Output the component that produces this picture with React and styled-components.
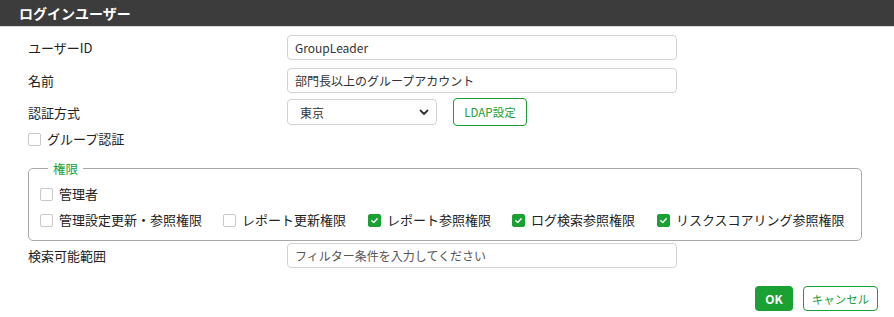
import React from "react";
import styled, { createGlobalStyle } from "styled-components";

const Global = createGlobalStyle`
  body { margin: 0; background: #fff; font-family: "Noto Sans CJK JP", "Noto Sans", sans-serif; color: #222; }
  * { box-sizing: border-box; }
`;

const GREEN = "#1aa033";

const Page = styled.div`
  width: 894px;
  height: 317px;
  display: flex;
  flex-direction: column;
`;

const Header = styled.div`
  height: 27px;
  background: #3c3c3c;
  border-bottom: 1px solid #d8d8d8;
  color: #fff;
  font-weight: 700;
  font-size: 14px;
  padding-left: 19px;
  display: flex;
  align-items: center;
`;

const Body = styled.div`
  padding: 8px 32px 0 28px;
  display: flex;
  flex-direction: column;
`;

const Row = styled.div`
  display: grid;
  grid-template-columns: 259px auto;
  align-items: center;
  margin-bottom: ${(p) => p.$mb ?? 8}px;
`;

const Label = styled.div`
  font-size: 13px;
  color: #222;
`;

const Input = styled.input`
  width: 390px;
  height: 25px;
  border: 1px solid #cfd3d8;
  border-radius: 4px;
  padding: 0 7px;
  font-size: 12px;
  font-family: inherit;
  color: #333;
  outline: none;
  &::placeholder { color: #555; }
`;

const Controls = styled.div`
  display: flex;
  align-items: center;
  gap: 16px;
`;

const SelectBox = styled.div`
  width: 150px;
  height: 26px;
  border: 1px solid #cfd3d8;
  border-radius: 4px;
  padding: 0 6px 0 12px;
  font-size: 12px;
  display: flex;
  align-items: center;
  justify-content: space-between;
  color: #333;
`;

const OutlineButton = styled.button`
  height: ${(p) => p.$h ?? 28}px;
  width: ${(p) => p.$w}px;
  padding: 0;
  border: 1px solid ${GREEN};
  border-radius: 4px;
  background: #fff;
  color: ${GREEN};
  font-family: inherit;
  font-size: 11.5px;
  cursor: pointer;
`;

const SolidButton = styled.button`
  height: 25px;
  width: 38px;
  border: none;
  border-radius: 4px;
  background: ${GREEN};
  color: #fff;
  font-family: inherit;
  font-weight: 700;
  font-size: 12px;
`;

const CheckLabel = styled.label`
  display: flex;
  align-items: center;
  gap: 6px;
  font-size: 13px;
  line-height: 16px;
  color: #222;
`;

const Box = styled.span`
  width: 13px;
  height: 13px;
  border: 1px solid ${(p) => (p.$on ? GREEN : "#c8c8c8")};
  background: ${(p) => (p.$on ? GREEN : "#fff")};
  border-radius: 2px;
  display: inline-flex;
  align-items: center;
  justify-content: center;
`;

const Fieldset = styled.fieldset`
  margin: 0;
  min-width: 0;
  border: 1px solid #a8a8a8;
  border-radius: 5px;
  padding: 9px 11px 12px 11px;
  width: 834px;
  display: flex;
  flex-direction: column;
  gap: 10px;
  margin-bottom: 2px;
`;

const Legend = styled.legend`
  color: ${GREEN};
  font-size: 12.5px;
  line-height: 17px;
  padding: 0 5px;
  margin-left: 8px;
`;

const PermRow = styled.div`
  display: flex;
  align-items: center;
`;

const PermCell = styled.div`
  width: ${(p) => p.$w}px;
  flex: none;
  display: flex;
`;

const Footer = styled.div`
  display: flex;
  justify-content: flex-end;
  gap: 10px;
  padding-right: 16px;
  margin-top: 18px;
`;

function Check({ on, children }) {
  return (
    <CheckLabel>
      <Box $on={on}>
        {on && (
          <svg width="9" height="9" viewBox="0 0 10 10">
            <path d="M2 5.2 L4.2 7.3 L8 3" fill="none" stroke="#fff" strokeWidth="1.6" strokeLinecap="round" strokeLinejoin="round" />
          </svg>
        )}
      </Box>
      {children}
    </CheckLabel>
  );
}

export default function App() {
  const perms = [
    { t: "管理設定更新・参照権限", on: false, w: 183 },
    { t: "レポート更新権限", on: false, w: 145 },
    { t: "レポート参照権限", on: true, w: 144 },
    { t: "ログ検索参照権限", on: true, w: 145 },
    { t: "リスクスコアリング参照権限", on: true, w: 190 },
  ];
  return (
    <Page>
      <Global />
      <Header>ログインユーザー</Header>
      <Body>
        <Row>
          <Label>ユーザーID</Label>
          <Input defaultValue="GroupLeader" />
        </Row>
        <Row $mb={5}>
          <Label>名前</Label>
          <Input defaultValue="部門長以上のグループアカウント" />
        </Row>
        <Row $mb={5}>
          <Label>認証方式</Label>
          <Controls>
            <SelectBox>
              <span>東京</span>
              <svg width="12" height="12" viewBox="0 0 12 12">
                <path d="M2.5 4.5 L6 8 L9.5 4.5" fill="none" stroke="#333" strokeWidth="1.8" strokeLinecap="round" strokeLinejoin="round" />
              </svg>
            </SelectBox>
            <OutlineButton $w={74}>LDAP設定</OutlineButton>
          </Controls>
        </Row>
        <Row $mb={13}>
          <Check on={false}>グループ認証</Check>
        </Row>
        <Fieldset>
          <Legend>権限</Legend>
          <PermRow>
            <Check on={false}>管理者</Check>
          </PermRow>
          <PermRow>
            {perms.map((p) => (
              <PermCell key={p.t} $w={p.w}>
                <Check on={p.on}>{p.t}</Check>
              </PermCell>
            ))}
          </PermRow>
        </Fieldset>
        <Row $mb={0}>
          <Label>検索可能範囲</Label>
          <Input placeholder="フィルター条件を入力してください" />
        </Row>
      </Body>
      <Footer>
        <SolidButton>OK</SolidButton>
        <OutlineButton $h={25} $w={75}>キャンセル</OutlineButton>
      </Footer>
    </Page>
  );
}
